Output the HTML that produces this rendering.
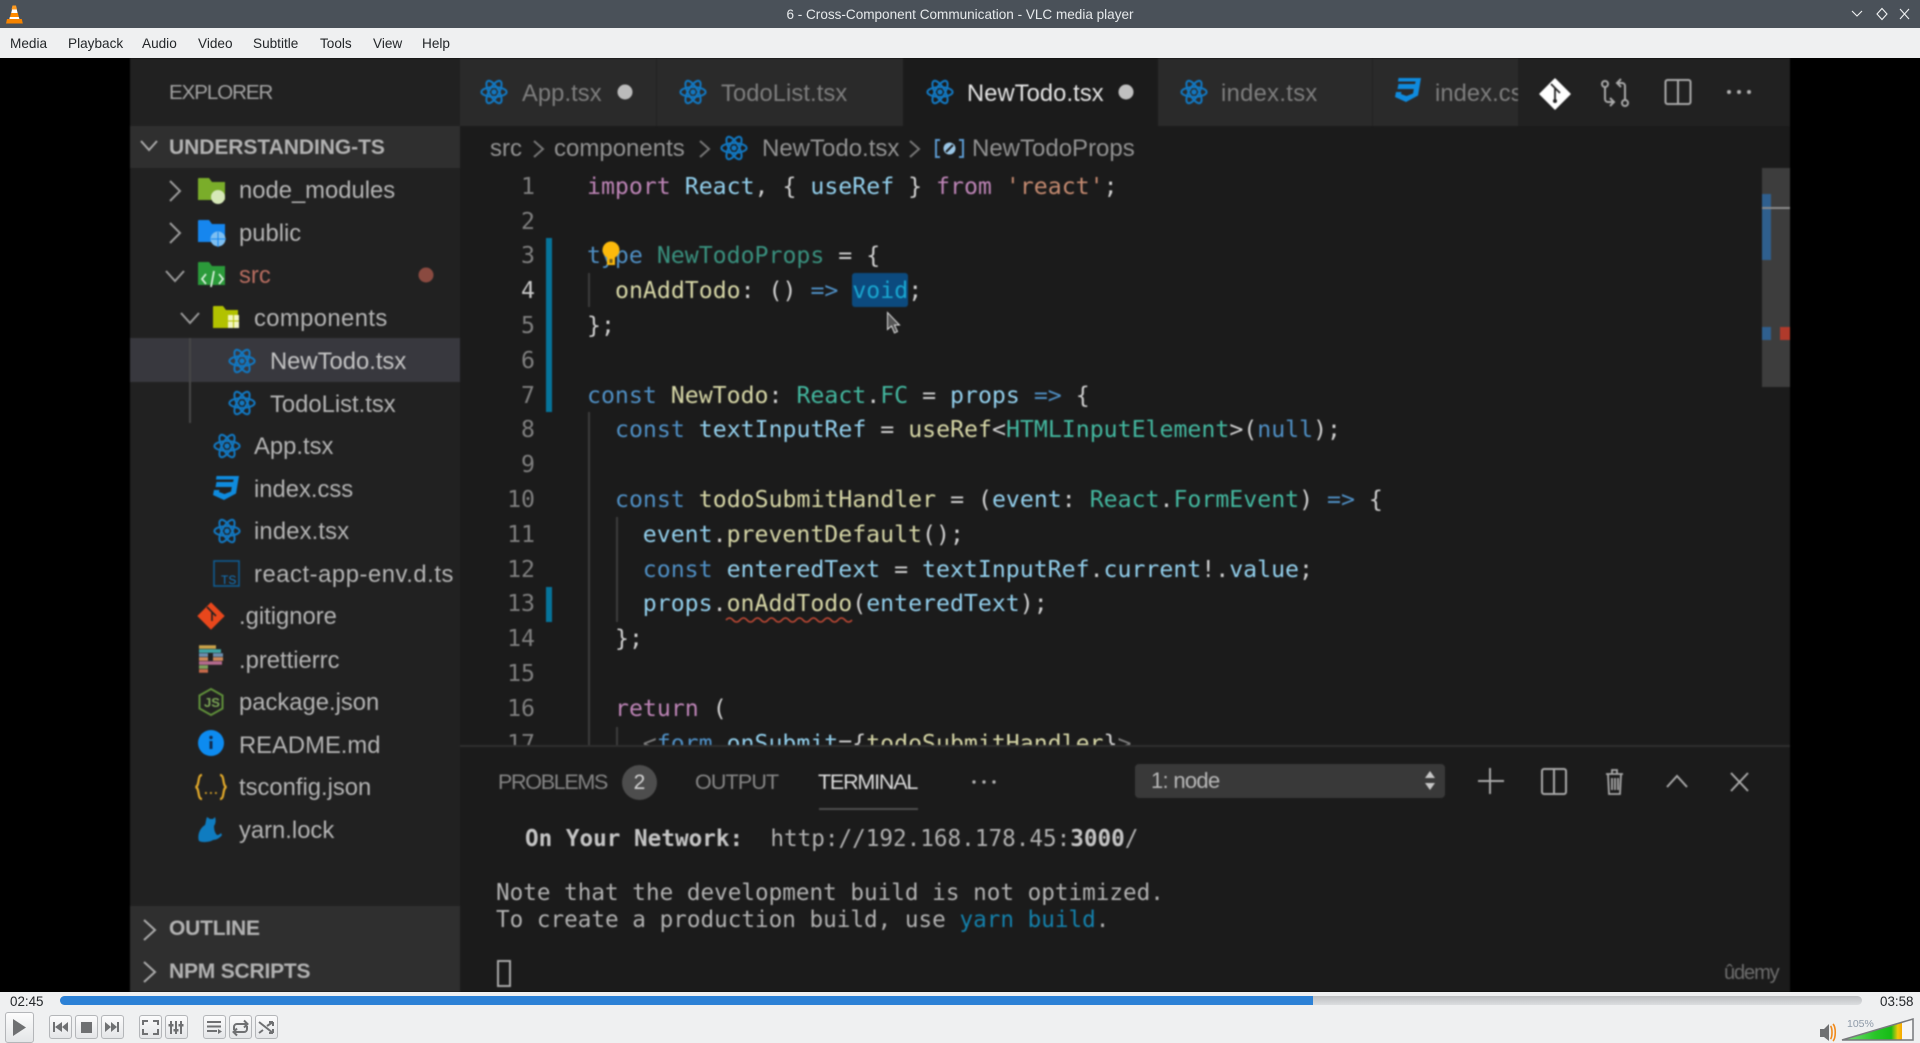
<!DOCTYPE html>
<html><head><meta charset="utf-8"><title>6 - Cross-Component Communication - VLC media player</title>
<style>
*{box-sizing:border-box}
html,body{margin:0;padding:0;width:1920px;height:1042px;overflow:hidden;background:#eff0f1;font-family:"Liberation Sans",sans-serif}
.a{position:absolute;white-space:pre}
.m{top:28px;line-height:31px;font-size:13.6px;color:#232629}
#v{position:absolute;left:0;top:58px;width:1920px;height:934px;background:#000;overflow:hidden}
#vv{position:absolute;left:0;top:-58px;width:1920px;height:1042px;filter:blur(.7px)}
.s{font-size:23.8px;line-height:42px;color:#b4b4b4}
.h{font-weight:bold;font-size:21px;line-height:42px;color:#b2b2b2}
.tab{font-size:23.7px;line-height:42px;color:#7e7e7e;letter-spacing:.1px}
.bc{font-size:24px;line-height:42px;color:#929292}
#code{position:absolute;left:-1px;top:127.2px;width:1761px;height:618.8px;overflow:hidden;font-family:"DejaVu Sans Mono",monospace;font-size:23.2px;line-height:34.8px;color:#d0d0d0}
#code div{position:absolute;white-space:pre;height:34.8px}
.n{left:470px;width:66px;text-align:right;color:#7f7f7f}
.k{color:#bd84b6}.b{color:#4f8fc4}.v{color:#92cfec}.f{color:#d6d6a6}.y{color:#43b79f}.st{color:#c48a70}.tg{color:#7d7d7d}
.term{font-family:"DejaVu Sans Mono",monospace;font-size:22.65px;line-height:34px;color:#b0b0b0}
.c{background:linear-gradient(#fcfcfc,#e4e6e8);border:1px solid #b4b6b9;border-radius:3px;position:absolute}
</style></head><body>

<div class="a" style="left:0;top:0;width:1920px;height:28px;background:#4a5159"></div>
<svg class="a" style="left:5px;top:5px" width="19" height="19" viewBox="0 0 19 19">
<path d="M7.5 0.5h3.5l1 4h-5.5z" fill="#ff9a1f"/><path d="M7 4.5h4.8l.8 3.5H6.2z" fill="#fff"/><path d="M6 8h6.8l1 4H5z" fill="#ff8a00"/><path d="M4.8 12h9l.6 2H4.4z" fill="#fff"/><path d="M2 14h14.8l1 4.5H1z" fill="#f58300"/></svg>
<div class="a" style="left:786px;top:1px;width:348px;line-height:28px;font-size:13.55px;color:#e6e9eb;text-align:center">6 - Cross-Component Communication - VLC media player</div>
<svg class="a" style="left:1848px;top:5px" width="68" height="18" viewBox="0 0 68 18" fill="none" stroke="#f0f2f3" stroke-width="1.1">
<path d="M4 6l5 5 5-5"/><path d="M34 3.500l5 5.500-5 5.500-5-5.500z"/><path d="M52 4l9 10M61 4l-9 10"/></svg>

<div class="a" style="left:0;top:28px;width:1920px;height:30px;background:#eff0f1"></div>
<span class="a m" style="left:10px">Media</span><span class="a m" style="left:68px">Playback</span><span class="a m" style="left:142px">Audio</span><span class="a m" style="left:198px">Video</span><span class="a m" style="left:253px">Subtitle</span><span class="a m" style="left:320px">Tools</span><span class="a m" style="left:373px">View</span><span class="a m" style="left:422px">Help</span>

<div id="v"><div id="vv">
<div class="a" style="left:130px;top:58px;width:1660px;height:934px;background:#1b1b1b"></div>
<!-- sidebar -->
<div class="a" style="left:130px;top:58px;width:330px;height:934px;background:#212121"></div>
<div class="a" style="left:130px;top:126px;width:330px;height:42px;background:#2f2f2f"></div>
<div class="a" style="left:130px;top:338px;width:330px;height:44px;background:#38383e"></div>
<div class="a" style="left:130px;top:906px;width:330px;height:86px;background:#2f2f2f"></div>
<div class="a" style="left:189px;top:338px;width:1.500px;height:85px;background:#474747"></div>
<span class="a" style="left:169px;top:72px;font-size:20.5px;line-height:42px;color:#a2a2a2;letter-spacing:-1.05px">EXPLORER</span>
<span class="a h" style="left:169px;top:127px;letter-spacing:-.05px">UNDERSTANDING-TS</span>
<span class="a s" style="left:239px;top:170px">node_modules</span>
<span class="a s" style="left:239px;top:213px">public</span>
<span class="a s" style="left:239px;top:255px;color:#b86d60">src</span>
<span class="a s" style="left:254px;top:298px;letter-spacing:.4px">components</span>
<span class="a s" style="left:270px;top:341px;color:#c4c4c4">NewTodo.tsx</span>
<span class="a s" style="left:270px;top:384px">TodoList.tsx</span>
<span class="a s" style="left:254px;top:426px">App.tsx</span>
<span class="a s" style="left:254px;top:469px">index.css</span>
<span class="a s" style="left:254px;top:511px;letter-spacing:.15px">index.tsx</span>
<span class="a s" style="left:254px;top:554px;letter-spacing:.55px">react-app-env.d.ts</span>
<span class="a s" style="left:239px;top:596px">.gitignore</span>
<span class="a s" style="left:239px;top:640px">.prettierrc</span>
<span class="a s" style="left:239px;top:682px">package.json</span>
<span class="a s" style="left:239px;top:725px">README.md</span>
<span class="a s" style="left:239px;top:767px">tsconfig.json</span>
<span class="a s" style="left:239px;top:810px">yarn.lock</span>
<span class="a h" style="left:169px;top:908px;letter-spacing:-.2px">OUTLINE</span>
<span class="a h" style="left:169px;top:951px;letter-spacing:-.2px">NPM SCRIPTS</span>

<!-- tabs -->
<div class="a" style="left:460px;top:58px;width:1330px;height:68px;background:#212121"></div>
<div class="a" style="left:460px;top:58px;width:196px;height:68px;background:#2a2a2a"></div>
<div class="a" style="left:657px;top:58px;width:246px;height:68px;background:#2a2a2a"></div>
<div class="a" style="left:903px;top:58px;width:255px;height:68px;background:#1b1b1b"></div>
<div class="a" style="left:1158px;top:58px;width:214px;height:68px;background:#2a2a2a"></div>
<div class="a" style="left:1373px;top:58px;width:145px;height:68px;background:#2a2a2a;overflow:hidden"><span class="a tab" style="left:62px;top:15px">index.css</span></div>
<span class="a tab" style="left:522px;top:73px">App.tsx</span>
<span class="a tab" style="left:721px;top:73px">TodoList.tsx</span>
<span class="a tab" style="left:967px;top:73px;color:#e4e4e4">NewTodo.tsx</span>
<span class="a tab" style="left:1221px;top:73px;letter-spacing:.35px">index.tsx</span>
<!-- breadcrumb -->
<span class="a bc" style="left:490px;top:128px">src</span>
<span class="a bc" style="left:554px;top:128px">components</span>
<span class="a bc" style="left:762px;top:128px">NewTodo.tsx</span>
<span class="a bc" style="left:972px;top:128px">NewTodoProps</span>

<!-- code -->
<div class="a" style="left:546px;top:238px;width:6px;height:174px;background:#06749b"></div>
<div class="a" style="left:546px;top:587px;width:6px;height:35px;background:#06749b"></div>
<div class="a" style="left:852px;top:273px;width:56px;height:34px;background:#0c4a7e;border-radius:3px"></div>
<div class="a" style="left:588px;top:273px;width:1.500px;height:34px;background:#3c3c3c"></div>
<div class="a" style="left:588px;top:412px;width:1.500px;height:334px;background:#3c3c3c"></div>
<div class="a" style="left:616px;top:517px;width:1.500px;height:105px;background:#3c3c3c"></div>
<div class="a" style="left:616px;top:727px;width:1.500px;height:19px;background:#3c3c3c"></div>
<div id="code">
<div class="n" style="top:42.6px">1</div>
<div class="n" style="top:77.400px">2</div>
<div class="n" style="top:112.200px">3</div>
<div class="n" style="top:147px;color:#c8c8c8">4</div>
<div class="n" style="top:181.800px">5</div>
<div class="n" style="top:216.600px">6</div>
<div class="n" style="top:251.400px">7</div>
<div class="n" style="top:286.200px">8</div>
<div class="n" style="top:321px">9</div>
<div class="n" style="top:355.800px">10</div>
<div class="n" style="top:390.600px">11</div>
<div class="n" style="top:425.400px">12</div>
<div class="n" style="top:460.200px">13</div>
<div class="n" style="top:495px">14</div>
<div class="n" style="top:529.800px">15</div>
<div class="n" style="top:564.600px">16</div>
<div class="n" style="top:599.400px">17</div>
<div style="left:588px;top:42.6px"><span class="k">import</span> <span class="v">React</span>, { <span class="v">useRef</span> } <span class="k">from</span> <span class="st">'react'</span>;</div>
<div style="left:588px;top:112.200px"><span class="b">type</span> <span class="y" style="opacity:.75">NewTodoProps</span> = {</div>
<div style="left:616px;top:147px"><span class="f">onAddTodo</span>: () <span class="b">=&gt;</span> <span style="color:#19a5cf">void</span>;</div>
<div style="left:588px;top:181.800px">};</div>
<div style="left:588px;top:251.400px"><span class="b">const</span> <span class="f">NewTodo</span>: <span class="y">React</span>.<span class="y">FC</span> = <span class="v">props</span> <span class="b">=&gt;</span> {</div>
<div style="left:616px;top:286.200px"><span class="b">const</span> <span class="v">textInputRef</span> = <span class="f">useRef</span>&lt;<span class="y">HTMLInputElement</span>&gt;(<span class="b">null</span>);</div>
<div style="left:616px;top:355.800px"><span class="b">const</span> <span class="f">todoSubmitHandler</span> = (<span class="v">event</span>: <span class="y">React</span>.<span class="y">FormEvent</span>) <span class="b">=&gt;</span> {</div>
<div style="left:643.800px;top:390.600px"><span class="v">event</span>.<span class="f">preventDefault</span>();</div>
<div style="left:643.800px;top:425.400px"><span class="b">const</span> <span class="v">enteredText</span> = <span class="v">textInputRef</span>.<span class="v">current</span>!.<span class="v">value</span>;</div>
<div style="left:643.800px;top:460.200px"><span class="v">props</span>.<span class="f">onAddTodo</span>(<span class="v">enteredText</span>);</div>
<div style="left:616px;top:495px">};</div>
<div style="left:616px;top:564.600px"><span class="k">return</span> (</div>
<div style="left:643.800px;top:599.400px"><span class="tg">&lt;</span><span class="b">form</span> <span class="v">onSubmit</span>={<span class="f">todoSubmitHandler</span>}<span class="tg">&gt;</span></div>
</div>

<!-- minimap -->
<div class="a" style="left:1762px;top:168px;width:28px;height:219px;background:#3d3d3d"></div>
<div class="a" style="left:1762px;top:194px;width:9px;height:66px;background:#2f5f8e"></div>
<div class="a" style="left:1762px;top:207px;width:28px;height:2px;background:#8a8a8a"></div>
<div class="a" style="left:1762px;top:327px;width:9px;height:13px;background:#2f5f8e"></div>
<div class="a" style="left:1780px;top:327px;width:10px;height:13px;background:#b03a2b"></div>

<!-- panel -->
<div class="a" style="left:460px;top:745px;width:1330px;height:2px;background:#2e2e2e"></div>
<span class="a" style="left:498px;top:761px;font-size:21.500px;line-height:42px;color:#858585;letter-spacing:-1.3px">PROBLEMS</span>
<div class="a" style="left:622px;top:765px;width:35px;height:35px;border-radius:50%;background:#4d4d4d;color:#d4d4d4;font-size:21px;line-height:35px;text-align:center">2</div>
<span class="a" style="left:695px;top:761px;font-size:21.500px;line-height:42px;color:#858585;letter-spacing:-.85px">OUTPUT</span>
<span class="a" style="left:818px;top:761px;font-size:21.500px;line-height:42px;color:#dadada;letter-spacing:-1.2px">TERMINAL</span>
<div class="a" style="left:819px;top:808px;width:99px;height:2px;background:#4e4e4e"></div>
<div class="a" style="left:1135px;top:764px;width:310px;height:34px;background:#393939;border-radius:4px"></div>
<span class="a" style="left:1151px;top:760px;font-size:22px;line-height:42px;color:#b8b8b8;letter-spacing:-.7px">1: node</span>
<div class="a term" style="left:525px;top:822px"><b style="color:#c4c4c4">On Your Network:</b>  http://192.168.178.45:<b style="color:#c4c4c4">3000</b>/</div>
<div class="a term" style="left:496px;top:876px">Note that the development build is not optimized.</div>
<div class="a term" style="left:496px;top:903px">To create a production build, use <span style="color:#1480ab">yarn build</span>.</div>
<div class="a" style="left:497px;top:960px;width:14px;height:27px;border:2px solid #a8a8a8"></div>
<span class="a" style="left:1724px;top:952px;font-size:20px;line-height:42px;color:#6e6e6e;letter-spacing:-1.1px">ûdemy</span>

<!-- icons -->
<svg class="a" style="left:0;top:0" width="1920" height="1042" viewBox="0 0 1920 1042">
<defs>
<symbol id="r" viewBox="-15 -14 30 28" overflow="visible"><g fill="none" stroke="#1277c0" stroke-width="2.200"><ellipse rx="13.500" ry="5.200"/><ellipse rx="13.500" ry="5.200" transform="rotate(60)"/><ellipse rx="13.500" ry="5.200" transform="rotate(120)"/></g><circle r="2.800" fill="#1277c0"/></symbol>
<symbol id="css" viewBox="0 0 26 24"><path d="M3.500 0H26l-3 17.500L11 24 0 19l1-5h5.500l-.5 2 5.500 2 6.500-2.500.8-4.500H2.500l1-5h16.500l.7-2.500H3z" fill="#0f8bde"/></symbol>
</defs>
<g fill="none" stroke="#9a9a9a" stroke-width="2">
<path d="M141 141l8 9 8-9" stroke="#aaa"/>
<path d="M170 181l10 10-10 10" />
<path d="M170 223l10 10-10 10"/>
<path d="M166 271l9 10 9-10"/>
<path d="M181 313l9 10 9-10"/>
<path d="M144 920l11 10-11 10" stroke="#aaa"/>
<path d="M144 962l11 10-11 10" stroke="#aaa"/>
<path d="M534 141l9 8-9 8" stroke="#777"/>
<path d="M700 141l9 8-9 8" stroke="#777"/>
<path d="M910 141l9 8-9 8" stroke="#777"/>
</g>
<circle cx="426" cy="275" r="7.500" fill="#8a4a40"/>
<!-- node_modules -->
<path d="M198 179a1 1 0 011-1h10l3 4h13v18h-27z" fill="#7aad2a"/><circle cx="218" cy="197" r="7" fill="#d6e8b8"/>
<!-- public -->
<path d="M198 221a1 1 0 011-1h10l3 4h13v18h-27z" fill="#1686ee"/><circle cx="218" cy="239" r="7.500" fill="#7dbff2"/><path d="M211 239h15M218 232v15" stroke="#1686ee" stroke-width="1"/>
<!-- src -->
<path d="M198 263a1 1 0 011-1h10l3 4h13v19h-27z" fill="#2b9a3a"/><path d="M206 274l-4 5 4 5M219 274l4 5-4 5M214 271l-3 16" stroke="#d8f0dc" stroke-width="1.800" fill="none"/>
<!-- components -->
<path d="M213 307a1 1 0 011-1h9l3 4h12v18h-25z" fill="#b2c200"/><rect x="228" y="315" width="11" height="13" fill="#f2f5c0"/><path d="M233.500 315v13M228 321h11" stroke="#b2c200" stroke-width="1"/>
<use href="#r" x="228" y="347" width="28" height="28"/>
<use href="#r" x="228" y="389" width="28" height="28"/>
<use href="#r" x="213" y="432" width="28" height="28"/>
<use href="#css" x="213" y="476" width="26" height="24"/>
<use href="#r" x="213" y="517" width="28" height="28"/>
<rect x="214" y="561" width="25" height="25" fill="none" stroke="#0e5e96" stroke-width="1.500"/><text x="221" y="584" font-family="Liberation Sans,sans-serif" font-size="12" fill="#1277c0">TS</text>
<!-- gitignore -->
<path d="M211 603l13 13-13 13-13-13z" fill="#e8471c" stroke="#e8471c" stroke-width="1" stroke-linejoin="round"/><path d="M207 607l5 5v9M212 612l4 4" stroke="#212121" stroke-width="1.600" fill="none"/>
<!-- prettier -->
<g stroke-width="3.500" fill="none"><path d="M199 647h17" stroke="#c9a24a"/><path d="M199 651h22" stroke="#3fa6a6"/><path d="M199 655h9M213 655h10" stroke="#6d8fb0"/><path d="M199 659h9M213 659h10" stroke="#d18a5a"/><path d="M199 663h23" stroke="#b46a8e"/><path d="M199 667h9" stroke="#7fa35c"/><path d="M199 671h9" stroke="#c96a4a"/></g>
<!-- package -->
<path d="M211 689l11.500 6.500v13l-11.500 6.500-11.500-6.500v-13z" fill="none" stroke="#5f8f3a" stroke-width="2"/><text x="204" y="707" font-family="Liberation Sans,sans-serif" font-size="13" font-weight="bold" fill="#7aa455">JS</text>
<!-- readme -->
<circle cx="211" cy="743" r="13" fill="#0d8bf0"/><rect x="209.500" y="741" width="3" height="8" fill="#102c50"/><circle cx="211" cy="737.500" r="1.700" fill="#102c50"/>
<!-- tsconfig -->
<g fill="none" stroke="#e0a82a" stroke-width="2.200"><path d="M202 775c-5 0-2 11-6.500 12 4.500 1 1.500 12 6.500 12"/><path d="M220 775c5 0 2 11 6.500 12-4.500 1-1.500 12-6.500 12"/></g><path d="M205 793h1.800M210 793h1.800M215 793h1.800" stroke="#e0a82a" stroke-width="1.800"/>
<!-- yarn -->
<path d="M199 841c-2-6 1-13 6-16 1-3 1-6 2-8l3 2h3l2-2c1 3 1 6-1 9 0 4 1 7 3 9 2 0 3-1 4-2l1 2c-2 3-6 5-9 5-3 2-10 3-14 1z" fill="#0f7cc0"/>
<!-- tab icons -->
<use href="#r" x="480" y="78" width="28" height="28"/>
<use href="#r" x="679" y="78" width="28" height="28"/>
<use href="#r" x="926" y="78" width="28" height="28"/>
<use href="#r" x="1180" y="78" width="28" height="28"/>
<use href="#css" x="1395" y="78" width="26" height="24"/>
<use href="#r" x="720" y="134" width="28" height="28"/>
<circle cx="625" cy="92" r="7.500" fill="#bbb"/>
<circle cx="1126" cy="92" r="7.500" fill="#c0c0c0"/>
<!-- symbol icon -->
<path d="M940 140h-4v17h4M959 140h4v17h-4" fill="none" stroke="#5c9ad0" stroke-width="2"/><circle cx="949.500" cy="148.500" r="6" fill="#9ac6e6"/><path d="M946 152l7-7" stroke="#1b1b1b" stroke-width="2"/>
<!-- git + actions -->
<path d="M1555 79l15 15-15 15-15-15z" fill="#fff" stroke="#fff" stroke-width="1.500" stroke-linejoin="round"/><path d="M1551 84l4 4v12M1555 88l5 5" stroke="#222" stroke-width="1.800" fill="none"/><circle cx="1555" cy="101" r="2" fill="#222"/>
<g fill="none" stroke="#a8a8a8" stroke-width="2">
<circle cx="1605" cy="84" r="3"/><circle cx="1625" cy="103" r="3"/>
<path d="M1605 87v12a3 3 0 003 3h5M1610 98l4 4-4 4M1625 100V86a3 3 0 00-3-3h-5M1621 79l-4 4 4 4"/>
<rect x="1665.500" y="80" width="25" height="24" rx="2"/><path d="M1678 80v24"/>
<!-- panel icons -->
<path d="M1478 781h26M1490 768v26"/>
<rect x="1542" y="769" width="24" height="25" rx="2"/><path d="M1554 769v25"/>
<path d="M1606 774h17M1608 774l1 20h11l1-20M1612 774v-4h5v4M1612 778v12M1615 778v12M1618 778v12" stroke-width="1.800"/>
<path d="M1667 787l10-11 10 11"/>
<path d="M1731 773l17 18M1748 773l-17 18"/>
</g>
<circle cx="1729" cy="92" r="2" fill="#b0b0b0"/><circle cx="1739" cy="92" r="2" fill="#b0b0b0"/><circle cx="1749" cy="92" r="2" fill="#b0b0b0"/>
<circle cx="974" cy="782" r="1.700" fill="#b0b0b0"/><circle cx="984" cy="782" r="1.700" fill="#b0b0b0"/><circle cx="994" cy="782" r="1.700" fill="#b0b0b0"/>
<path d="M1430 771l5 7h-10zM1430 790l5-7h-10z" fill="#c8c8c8"/>
<!-- squiggle -->
<path d="M726 620q3.500-4 7 0t7 0 7 0 7 0 7 0 7 0 7 0 7 0 7 0 7 0 7 0 7 0 7 0 7 0 7 0 7 0 7 0 7 0" fill="none" stroke="#c24a35" stroke-width="1.600"/>
<!-- bulb -->
<circle cx="611" cy="250" r="8.500" fill="#fcb90c"/><rect x="607" y="256" width="8" height="9" fill="#fcb90c"/><rect x="609.500" y="259" width="3" height="4" fill="#776018"/>
<!-- cursor -->
<path d="M887.500 312.500v17l4-3.500 3 7 3-1.500-3-6.500h5z" fill="#555" stroke="#ddd" stroke-width="1"/>
</svg>
</div></div>

<!-- VLC controls -->
<div class="a" style="left:0;top:992px;width:1920px;height:50px;background:#eff0f1"></div>
<span class="a" style="left:10px;top:993px;font-size:13.400px;line-height:18px;color:#232629">02:45</span>
<span class="a" style="left:1880px;top:993px;font-size:13.400px;line-height:18px;color:#232629">03:58</span>
<div class="a" style="left:60px;top:996px;width:1802px;height:9px;border-radius:4.500px;background:linear-gradient(#bcbec1,#dcdee0);overflow:hidden"><div style="width:1253px;height:9px;background:#2c81d6"></div></div>
<div class="c" style="left:5px;top:1012px;width:29px;height:31px"></div>
<div class="c" style="left:49px;top:1015px;width:23px;height:24px"></div>
<div class="c" style="left:75px;top:1015px;width:23px;height:24px"></div>
<div class="c" style="left:101px;top:1015px;width:23px;height:24px"></div>
<div class="c" style="left:139px;top:1015px;width:23px;height:24px"></div>
<div class="c" style="left:165px;top:1015px;width:23px;height:24px"></div>
<div class="c" style="left:203px;top:1015px;width:23px;height:24px"></div>
<div class="c" style="left:229px;top:1015px;width:23px;height:24px"></div>
<div class="c" style="left:255px;top:1015px;width:23px;height:24px"></div>
<svg class="a" style="left:0;top:992px" width="300" height="50" viewBox="0 0 300 50">
<path d="M13 27l13 8.500-13 8.500z" fill="#6f7072"/>
<g transform="translate(0 8)">
<g fill="#6f7072">
<path d="M53 22h2v10h-2zM55 27l7-5v10zM62 27l6-5v10z"/>
<rect x="81" y="22" width="11" height="11"/>
<path d="M105 22l6 5-6 5zM111 22l6 5-6 5zM117 22h2v10h-2z"/>
</g>
<g fill="none" stroke="#6f7072" stroke-width="2">
<path d="M143 25v-4h5M153 21h5v4M158 29v5h-5M148 34h-5v-5"/>
<path d="M171 21v13M176 21v13M181 21v13" />
<path d="M207 22h14M207 26.500h14M207 31h10"/>
<path d="M234 30v-3a3 3 0 013-3h10M244 20.500l3.500 3.500-3.500 3.500M247 26v3a3 3 0 01-3 3h-10M237 35.500l-3.500-3.500 3.500-3.500"/>
<path d="M259 22l14 11M259 33l4-3M267 26l6-4M273 22h-4M273 22v4M273 33h-4M273 33v-4"/>
</g>
<g fill="#6f7072"><rect x="168.500" y="24" width="5" height="2.500"/><rect x="173.500" y="29" width="5" height="2.500"/><rect x="178.500" y="24" width="5" height="2.500"/><path d="M218 29l4 2.500-4 2.500z"/></g>
</g>
</svg>
<span class="a" style="left:1847px;top:1018px;font-size:10.500px;line-height:12px;color:#8e9aa8">105%</span>
<svg class="a" style="left:1814px;top:1015px" width="106" height="27" viewBox="-1 0 106 27">
<defs><linearGradient id="g" x1="0" x2="1" y1="0" y2="0"><stop offset="0" stop-color="#7ede7e"/><stop offset=".55" stop-color="#28c628"/><stop offset=".82" stop-color="#16bc16"/><stop offset=".93" stop-color="#f4c80c"/><stop offset="1" stop-color="#f6a800"/></linearGradient></defs>
<path d="M5 14h4l5-5v17l-5-4H5z" fill="#6f7072"/>
<path d="M15.500 11c2 2 2 11 0 13M18 9c3 3 3 14 0 17" fill="none" stroke="#f08a1c" stroke-width="1.600"/>
<path d="M27 25L87 7v18z" fill="url(#g)"/>
<path d="M87 7l11-3v21H87z" fill="#f6f6f6"/>
<path d="M27 25L98 4v21z" fill="none" stroke="#77797c" stroke-width="1.500"/>
</svg>
</body></html>
